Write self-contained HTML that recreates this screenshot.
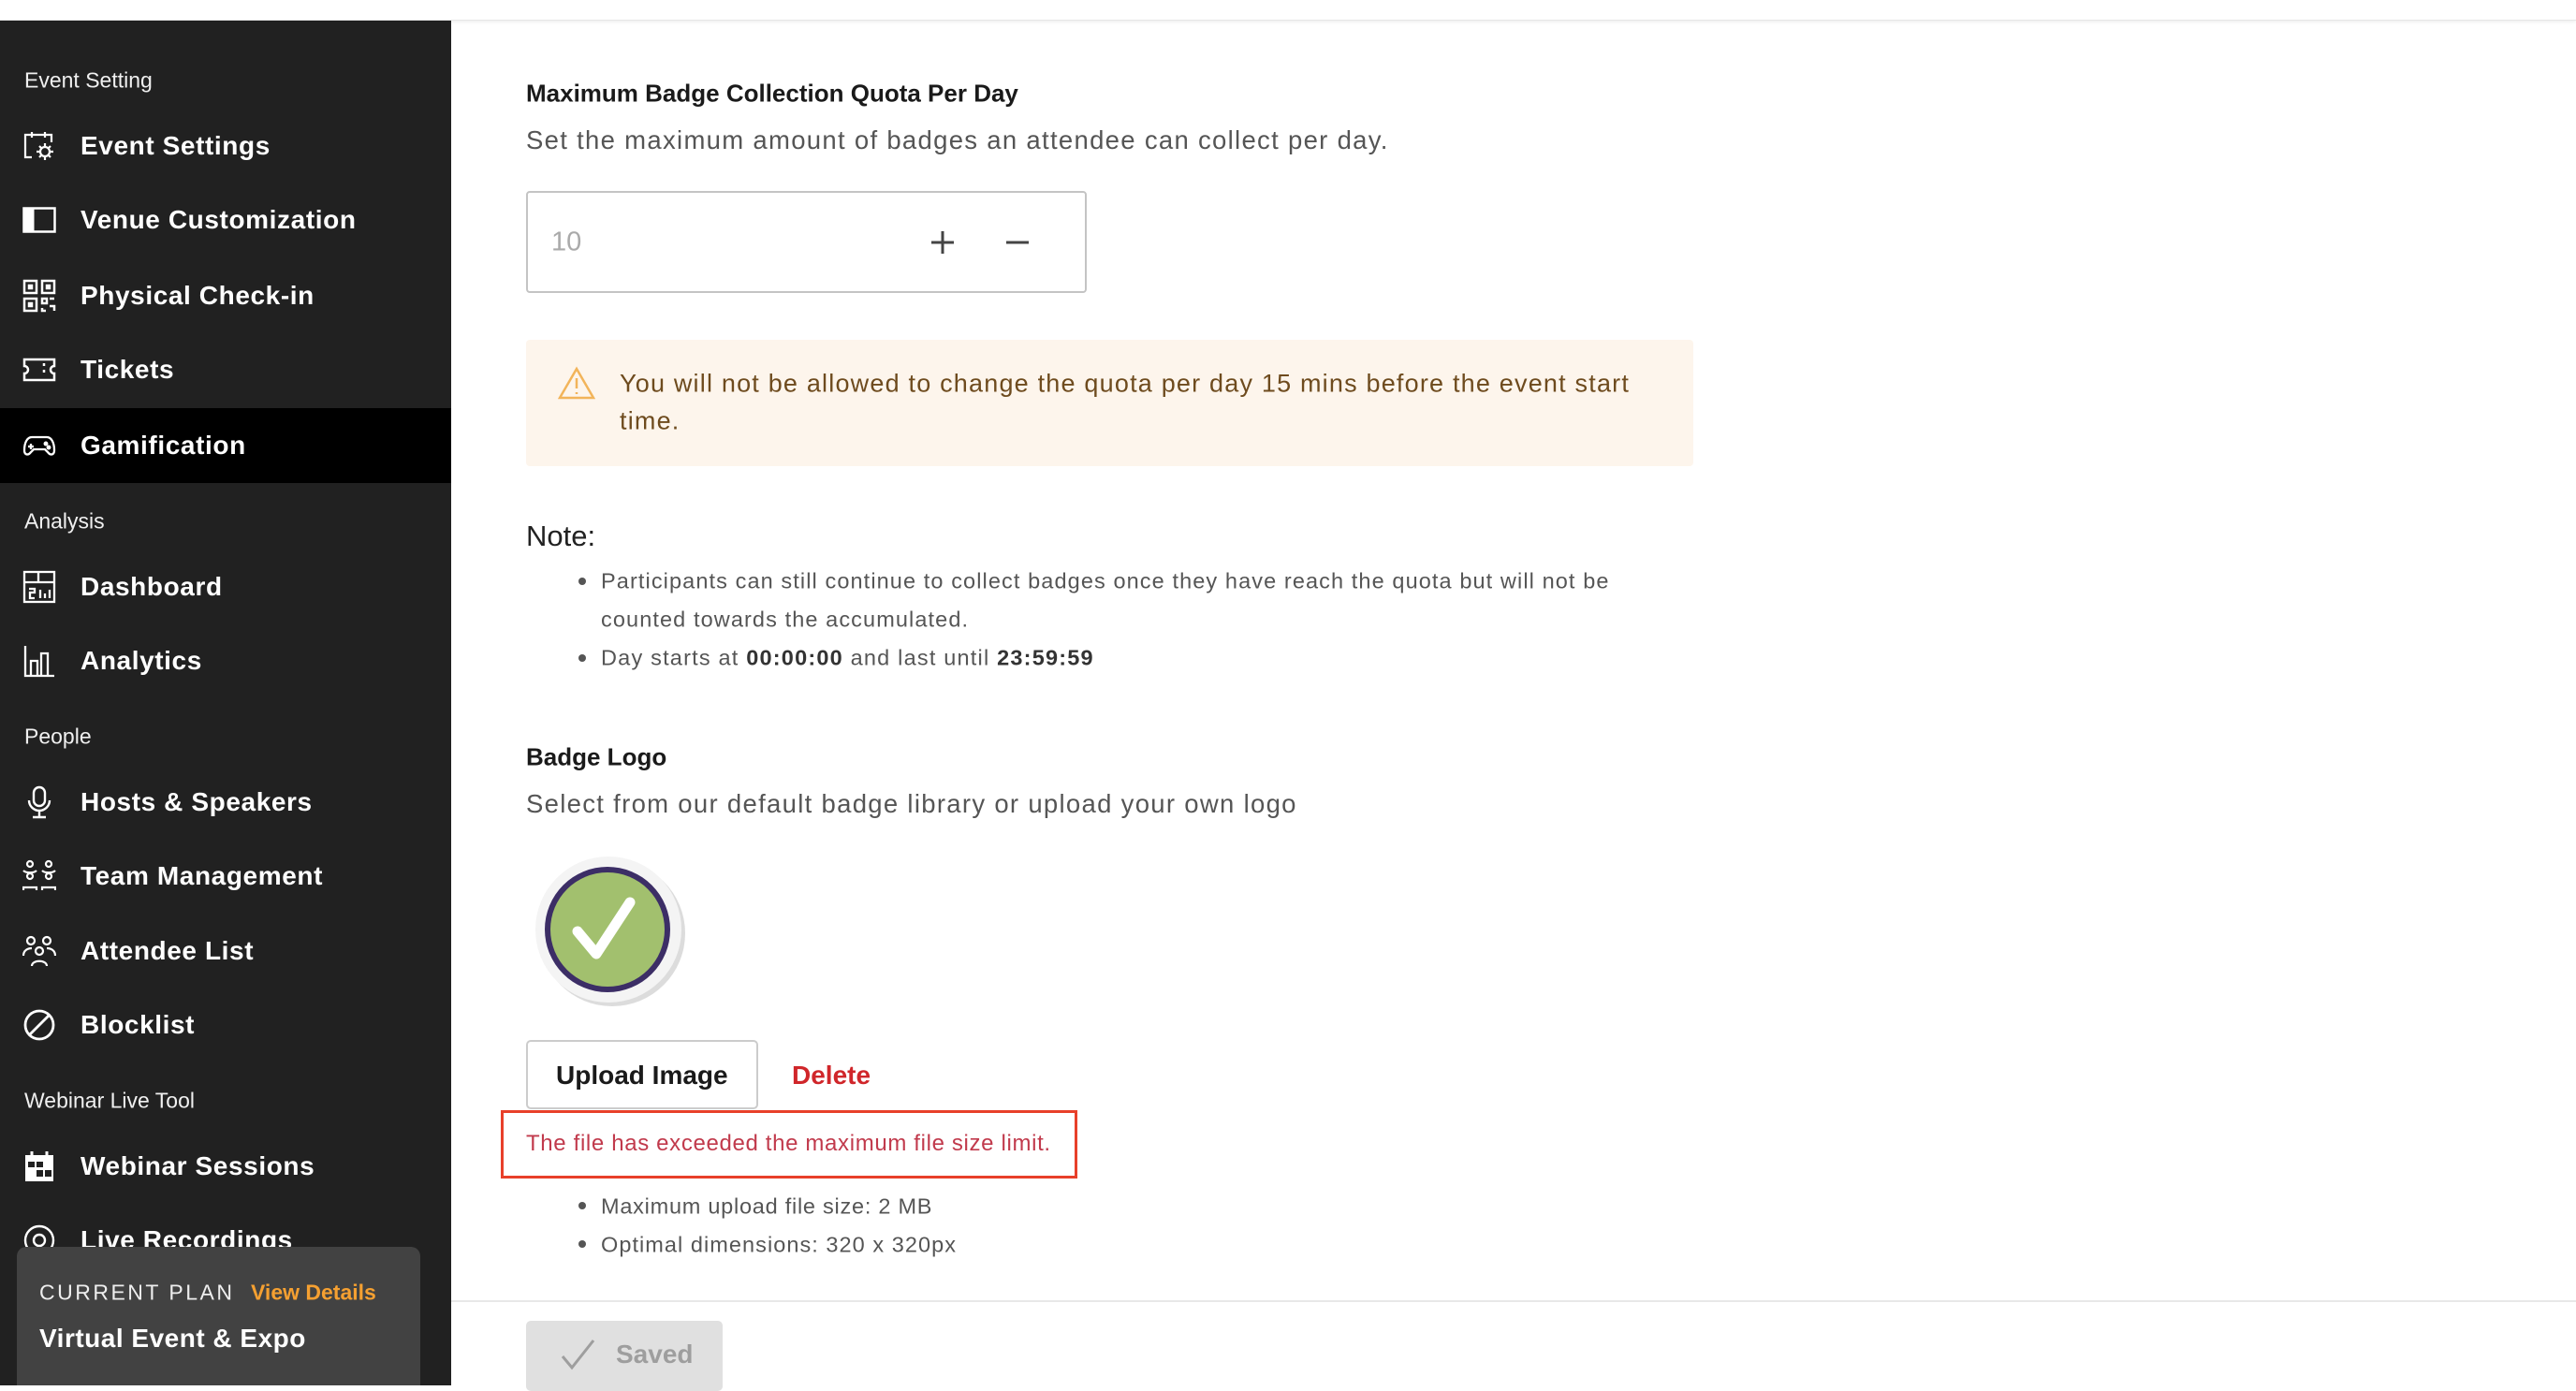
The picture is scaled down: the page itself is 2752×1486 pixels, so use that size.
<!DOCTYPE html>
<html><head><meta charset="utf-8"><style>
*{margin:0;padding:0;box-sizing:border-box}
body{width:2752px;height:1480px;overflow:hidden;background:#fff;font-family:"Liberation Sans",sans-serif;position:relative}
.topbar{position:absolute;left:0;top:0;width:2752px;height:22px;background:#fff;border-bottom:1px solid #e6e6e6;box-shadow:0 2px 3px rgba(0,0,0,.06)}
.side{position:absolute;left:0;top:22px;width:482px;height:1458px;background:#212121;color:#fff;overflow:hidden}
.lbl{position:absolute;left:26px;font-size:23px;color:#f0f0f0;transform:translateY(-50%);margin-top:2px}
.item{position:absolute;left:0;width:482px;height:80px;display:flex;align-items:center;transform:translateY(-50%);margin-top:2px}
.item.act{background:#000}
.item svg{position:absolute;left:24px;width:36px;height:36px}
.item span{position:absolute;left:86px;font-size:28px;font-weight:bold;letter-spacing:.6px}
.plan{position:absolute;left:18px;top:1310px;width:431px;height:160px;background:#424242;border-radius:10px}
.main{position:absolute;left:0;top:0}
.t{position:absolute;white-space:nowrap;transform:translateY(-50%)}
</style></head><body>
<div class="topbar"></div>
<div class="side">
<div class="lbl" style="top:62px">Event Setting</div>
<div class="item" style="top:132px"><svg viewBox="0 0 36 36" fill="none" stroke="#fff" stroke-width="2.2"><path d="M10 30H3V6h28v8M10 3v6M24 3v6"/><circle cx="24" cy="24" r="5"/><path d="M24 15v3M24 30v3M15 24h3M30 24h3M18 18l2 2M28 28l2 2M18 30l2-2M28 20l2-2"/></svg><span>Event Settings</span></div>
<div class="item" style="top:211px"><svg viewBox="0 0 36 36"><rect x="1.5" y="5.5" width="33" height="25" fill="none" stroke="#fff" stroke-width="2.5"/><rect x="1.5" y="5.5" width="11" height="25" fill="#fff"/></svg><span>Venue Customization</span></div>
<div class="item" style="top:292px"><svg viewBox="0 0 36 36" fill="none" stroke="#fff" stroke-width="2.5"><rect x="2" y="2" width="13" height="13"/><rect x="21" y="2" width="13" height="13"/><rect x="2" y="21" width="13" height="13"/><rect x="7" y="7" width="3" height="3" fill="#fff"/><rect x="26" y="7" width="3" height="3" fill="#fff"/><rect x="7" y="26" width="3" height="3" fill="#fff"/><path d="M21 21h5v5h-5zM29 21h5M29 29h5v5M21 31v3h4"/></svg><span>Physical Check-in</span></div>
<div class="item" style="top:371px"><svg viewBox="0 0 36 36" fill="none" stroke="#fff" stroke-width="2.5"><path d="M2 7h32v7a4 4 0 0 0 0 8v7H2v-7a4 4 0 0 0 0-8z"/><path d="M23 11v3M23 18v3"/></svg><span>Tickets</span></div>
<div class="item act" style="top:452px"><svg viewBox="0 0 36 36" fill="none" stroke="#fff" stroke-width="2.3"><path d="M10 9h16c5 0 8 6 8 14 0 5-4 6-7 2l-3-3H12l-3 3c-3 4-7 3-7-2 0-8 3-14 8-14z"/><path d="M9 16v6M6 19h6"/><circle cx="25" cy="16" r="1.3" fill="#fff"/><circle cx="28" cy="20" r="1.3" fill="#fff"/></svg><span>Gamification</span></div>
<div class="lbl" style="top:533px">Analysis</div>
<div class="item" style="top:603px"><svg viewBox="0 0 36 36" fill="none" stroke="#fff" stroke-width="2.3"><rect x="2" y="2" width="32" height="32"/><path d="M2 13h32M17 2v11M7 20h6v4h-5v6h5M19 21v9M24 25v5M29 21v9"/></svg><span>Dashboard</span></div>
<div class="item" style="top:682px"><svg viewBox="0 0 36 36" fill="none" stroke="#fff" stroke-width="2.3"><path d="M3 2v32h31M9 34V18h7v16M20 34V10h7v24"/></svg><span>Analytics</span></div>
<div class="lbl" style="top:763px">People</div>
<div class="item" style="top:833px"><svg viewBox="0 0 36 36" fill="none" stroke="#fff" stroke-width="2.4"><rect x="12" y="2" width="12" height="20" rx="6"/><path d="M7 16a11 11 0 0 0 22 0M18 27v6M11 34h14"/></svg><span>Hosts &amp; Speakers</span></div>
<div class="item" style="top:912px"><svg viewBox="0 0 36 36" fill="none" stroke="#fff" stroke-width="2.2"><circle cx="8" cy="5" r="3"/><circle cx="28" cy="5" r="3"/><circle cx="8" cy="18" r="3"/><circle cx="28" cy="18" r="3"/><path d="M1 12c3 3 11 3 14 0M21 12c3 3 11 3 14 0M1 33v-3h14v3M21 33v-3h14v3"/></svg><span>Team Management</span></div>
<div class="item" style="top:992px"><svg viewBox="0 0 36 36" fill="none" stroke="#fff" stroke-width="2.2"><circle cx="9" cy="7" r="4"/><circle cx="26" cy="7" r="4"/><circle cx="18" cy="18" r="4"/><path d="M1 23c0-6 5-8 9-8M35 23c0-6-5-8-9-8M10 34c0-7 16-7 16 0"/></svg><span>Attendee List</span></div>
<div class="item" style="top:1071px"><svg viewBox="0 0 36 36" fill="none" stroke="#fff" stroke-width="2.8"><circle cx="18" cy="18" r="15"/><path d="M8 28L28 8"/></svg><span>Blocklist</span></div>
<div class="lbl" style="top:1152px">Webinar Live Tool</div>
<div class="item" style="top:1222px"><svg viewBox="0 0 36 36"><rect x="3" y="6" width="30" height="28" fill="#fff"/><path d="M10 2v7M26 2v7" stroke="#fff" stroke-width="3"/><g fill="#212121"><rect x="6" y="13" width="7" height="6"/><rect x="15" y="13" width="7" height="6"/><rect x="15" y="22" width="7" height="7"/><rect x="24" y="22" width="7" height="7"/></g></svg><span>Webinar Sessions</span></div>
<div class="item" style="top:1301px"><svg viewBox="0 0 36 36" fill="none" stroke="#fff" stroke-width="2.4"><circle cx="18" cy="18" r="15"/><circle cx="18" cy="18" r="6"/></svg><span>Live Recordings</span></div>
<div class="plan">
<div class="t" style="left:24px;top:49px;font-size:23px;letter-spacing:2.5px;color:#eee">CURRENT PLAN</div>
<div class="t" style="left:250px;top:49px;font-size:23px;font-weight:bold;color:#f5a031">View Details</div>
<div class="t" style="left:24px;top:98px;font-size:28px;font-weight:bold;color:#fff;letter-spacing:.5px">Virtual Event &amp; Expo</div>
</div>
</div>

<div class="main">
<div class="t" style="left:562px;top:100px;font-size:26px;font-weight:bold;color:#1a1a1a">Maximum Badge Collection Quota Per Day</div>
<div class="t" style="left:562px;top:150px;font-size:27.5px;color:#555;letter-spacing:1.3px">Set the maximum amount of badges an attendee can collect per day.</div>
<div style="position:absolute;left:562px;top:204px;width:599px;height:109px;border:2px solid #c4c4c4;border-radius:4px"></div>
<div class="t" style="left:589px;top:259px;font-size:29px;color:#aaa">10</div>
<svg style="position:absolute;left:993px;top:245px" width="28" height="28" viewBox="0 0 28 28"><path d="M14 2v24M2 14h24" stroke="#444" stroke-width="3"/></svg>
<svg style="position:absolute;left:1073px;top:245px" width="28" height="28" viewBox="0 0 28 28"><path d="M2 14h24" stroke="#444" stroke-width="3"/></svg>

<div style="position:absolute;left:562px;top:363px;width:1247px;height:135px;background:#fdf5ec;border-radius:4px"></div>
<svg style="position:absolute;left:596px;top:391px" width="40" height="36" viewBox="0 0 40 36" fill="none" stroke="#f2b45a" stroke-width="2.5"><path d="M20 3L38 34H2z"/><path d="M20 13v11M20 28v2"/></svg>
<div class="t" style="left:662px;top:410px;font-size:27px;color:#6e4b1e;letter-spacing:1.2px">You will not be allowed to change the quota per day 15 mins before the event start</div>
<div class="t" style="left:662px;top:450px;font-size:27px;color:#6e4b1e;letter-spacing:1.2px">time.</div>

<div class="t" style="left:562px;top:573px;font-size:31px;color:#222">Note:</div>
<div style="position:absolute;left:618px;top:617px;width:8px;height:8px;border-radius:50%;background:#555"></div>
<div class="t" style="left:642px;top:621px;font-size:23.5px;color:#555;letter-spacing:1.1px">Participants can still continue to collect badges once they have reach the quota but will not be</div>
<div class="t" style="left:642px;top:662px;font-size:23.5px;color:#555;letter-spacing:1.1px">counted towards the accumulated.</div>
<div style="position:absolute;left:618px;top:699px;width:8px;height:8px;border-radius:50%;background:#555"></div>
<div class="t" style="left:642px;top:703px;font-size:23.5px;color:#555;letter-spacing:1.2px">Day starts at <b style="color:#333">00:00:00</b> and last until <b style="color:#333">23:59:59</b></div>

<div class="t" style="left:562px;top:809px;font-size:26px;font-weight:bold;color:#1a1a1a">Badge Logo</div>
<div class="t" style="left:562px;top:859px;font-size:27.5px;color:#555;letter-spacing:1.3px">Select from our default badge library or upload your own logo</div>
<svg style="position:absolute;left:570px;top:913px" width="165" height="165" viewBox="0 0 165 165"><circle cx="84" cy="84" r="78" fill="#dcdcdc"/><circle cx="80" cy="80" r="78" fill="#f4f4f4"/><circle cx="79" cy="80" r="67" fill="#3c2e66"/><circle cx="79" cy="80" r="61" fill="#a2c06e"/><path d="M47 82l20 24 36-55" fill="none" stroke="#fff" stroke-width="11" stroke-linecap="round" stroke-linejoin="round"/></svg>

<div style="position:absolute;left:562px;top:1111px;width:248px;height:74px;border:2px solid #ccc;border-radius:5px"></div>
<div class="t" style="left:594px;top:1149px;font-size:28px;font-weight:bold;color:#1a1a1a">Upload Image</div>
<div class="t" style="left:846px;top:1149px;font-size:28px;font-weight:bold;color:#d0262a">Delete</div>
<div style="position:absolute;left:535px;top:1186px;width:616px;height:73px;border:3.5px solid #e8402a"></div>
<div class="t" style="left:562px;top:1222px;font-size:24px;color:#c13a4c;letter-spacing:.65px">The file has exceeded the maximum file size limit.</div>
<div style="position:absolute;left:618px;top:1284px;width:8px;height:8px;border-radius:50%;background:#555"></div>
<div class="t" style="left:642px;top:1289px;font-size:23.5px;color:#555;letter-spacing:.75px">Maximum upload file size: 2 MB</div>
<div style="position:absolute;left:618px;top:1325px;width:8px;height:8px;border-radius:50%;background:#555"></div>
<div class="t" style="left:642px;top:1330px;font-size:23.5px;color:#555;letter-spacing:1.05px">Optimal dimensions: 320 x 320px</div>

<div style="position:absolute;left:482px;top:1389px;width:2270px;height:2px;background:#e8e8e8"></div>
<div style="position:absolute;left:562px;top:1411px;width:210px;height:75px;background:#e0e0e0;border-radius:5px"></div>
<svg style="position:absolute;left:598px;top:1429px" width="40" height="36" viewBox="0 0 40 36"><path d="M3 20l10 12L36 3" fill="none" stroke="#9e9e9e" stroke-width="3"/></svg>
<div class="t" style="left:658px;top:1447px;font-size:28px;font-weight:bold;color:#9e9e9e">Saved</div>
</div>
</body></html>
